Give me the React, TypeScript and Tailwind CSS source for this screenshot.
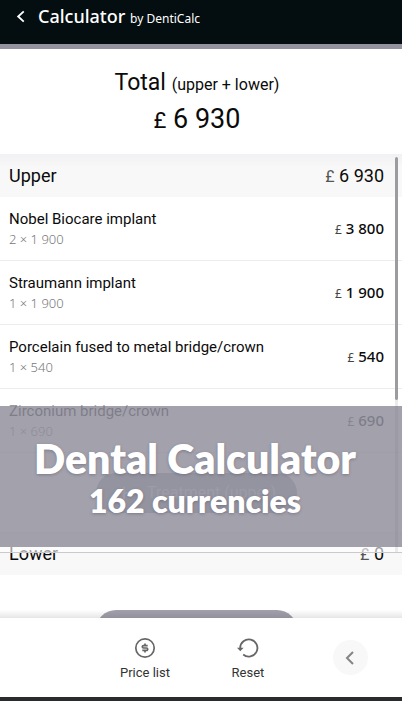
import React from "react";

type Item = { name: string; detail: string; price: string };

const upperItems: Item[] = [
  { name: "Nobel Biocare implant", detail: "2 × 1 900", price: "3 800" },
  { name: "Straumann implant", detail: "1 × 1 900", price: "1 900" },
  { name: "Porcelain fused to metal bridge/crown", detail: "1 × 540", price: "540" },
  { name: "Zirconium bridge/crown", detail: "1 × 690", price: "690" },
];

function SectionBar({ title, total }: { title: string; total: string }) {
  return (
    <div className="flex h-[43px] items-center justify-between bg-linear-to-b from-[#f1f1f4] to-[#f8f8f8] to-30% pr-[18px] pl-[9px] text-lg">
      <h2>{title}</h2>
      <p>
        <span className="text-base text-[#555]">£</span> {total}
      </p>
    </div>
  );
}

function ItemRow({ item }: { item: Item }) {
  return (
    <li className="flex h-16 items-center justify-between border-b border-[#ececee] pr-[18px] pl-[9px]">
      <div>
        <p className="text-[15px] leading-5">{item.name}</p>
        <p className="font-['Noto_Sans',sans-serif] text-[13px] leading-5 font-light text-[#777]">{item.detail}</p>
      </div>
      <p className="font-['Noto_Sans',sans-serif] text-[15px] font-medium">
        <span className="text-xs font-normal text-[#444]">£</span> {item.price}
      </p>
    </li>
  );
}

function TreatmentButton({ label, name }: { label?: string; name?: string }) {
  return (
    <div className="flex justify-center pt-5 pr-[9px] pb-[19px]">
      <button
        aria-label={name}
        className="flex h-10 w-[201px] items-center justify-center gap-4 rounded-full bg-[#a2a0ac] text-base text-white/60"
      >
        <svg viewBox="0 0 14 14" className="size-3.5" stroke="currentColor" strokeWidth="2">
          <path d="M7 1v12M1 7h12" />
        </svg>
        {label}
      </button>
    </div>
  );
}

export default function App() {
  return (
    <div className="flex h-screen flex-col overflow-hidden bg-white font-[Roboto,sans-serif] text-[#0b0b0b]">
      <header className="flex h-[49px] shrink-0 items-start border-b-5 border-[#94929f] bg-[#040e10] px-4 pt-1 font-['Noto_Sans',sans-serif] text-white">
        <button aria-label="Back" className="flex h-6 w-[22px] items-center">
          <svg viewBox="0 0 9 14" className="h-[13px] w-[9px]" fill="none" stroke="currentColor" strokeWidth="2">
            <path d="M8 1.5 2 7l6 5.5" />
          </svg>
        </button>
        <h1 className="text-lg leading-6 font-medium">
          Calculator <span className="text-xs font-normal">by DentiCalc</span>
        </h1>
      </header>

      <section className="h-[105px] shrink-0 pt-4 pr-2 text-center">
        <p className="text-[23px] leading-9">
          Total <span className="text-base leading-none">(upper + lower)</span>
        </p>
        <p className="text-[27px] leading-9">
          <span className="text-[22px] leading-none">£</span> 6 930
        </p>
      </section>

      <main className="relative min-h-0 flex-1 overflow-hidden">
        <SectionBar title="Upper" total="6 930" />
        <ul>
          {upperItems.map((item) => (
            <ItemRow key={item.name} item={item} />
          ))}
        </ul>
        <TreatmentButton label="Treatment (upper)" />
        <SectionBar title="Lower" total="0" />
        <div className="pt-[15px]">
          <TreatmentButton name="Treatment (lower)" />
        </div>

        <div className="absolute top-[3px] right-1 h-[243px] w-[3px] rounded-full bg-[#9c9c9e]" />
        <div className="absolute top-[246px] right-1 h-[153px] w-[3px] bg-[#9c9c9e]/50" />
        <div className="absolute inset-x-0 top-[246px] h-[153px] border-y-6 border-white/60 bg-[#92909d]/85 bg-clip-padding pt-[29px] pr-3 text-center font-[Lato,sans-serif] font-extrabold text-white text-shadow-[0_1px_3px_rgb(70_68_85/0.4)]">
          <p className="text-[41px] leading-[48px]">Dental Calculator</p>
          <p className="text-[32px] leading-9">162 currencies</p>
        </div>
        <div className="absolute inset-x-0 top-[398px] h-px bg-[#c9c9ce]" />
        <div className="absolute inset-x-0 bottom-0 h-2 bg-linear-to-b from-transparent to-black/10" />
      </main>

      <nav className="flex h-[83px] shrink-0 items-start justify-end border-b-4 border-[#292b2c] bg-white pt-[17px] pr-[34px] text-[13px] leading-5 text-[#333]">
        <button className="mr-[45px] flex w-[66px] flex-col items-center gap-1 whitespace-nowrap">
          <svg viewBox="0 0 24 24" className="size-6" fill="none" stroke="#666" strokeWidth="1.7">
            <circle cx="12" cy="13" r="9.2" />
            <path d="M14.7 10.6h-4.2a1.2 1.2 0 0 0 0 2.4h3a1.2 1.2 0 0 1 0 2.4H9.3M12 8.6v2M12 15.4v2" />
          </svg>
          Price list
        </button>
        <button className="mr-[60px] flex w-[50px] flex-col items-center gap-1 whitespace-nowrap">
          <svg viewBox="0 0 24 24" className="size-6" fill="none" stroke="#666" strokeWidth="1.8">
            <path d="M4.2 14.2V13a8.6 8.6 0 1 1 3 6.5" />
            <path d="m1 12.8 3.3 3.5 3.3-3.5Z" fill="#666" stroke="none" />
          </svg>
          Reset
        </button>
        <button aria-label="Collapse" className="mt-[5px] flex size-[35px] items-center justify-center rounded-full bg-[#f8f8f8]">
          <svg viewBox="0 0 9 14" className="mr-[3px] h-3.5 w-[9px]" fill="none" stroke="#858585" strokeWidth="2">
            <path d="M8 1 2 7l6 6" />
          </svg>
        </button>
      </nav>
    </div>
  );
}
